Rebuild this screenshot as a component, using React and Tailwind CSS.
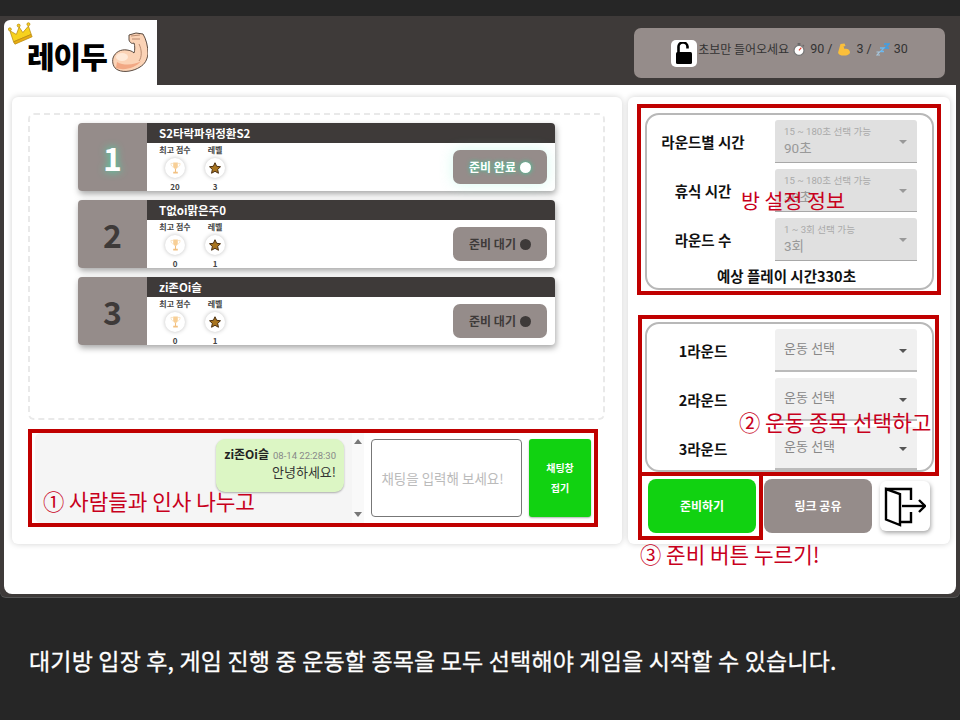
import React from "react";

const KR = "font-['Noto_Sans_CJK_KR','Noto_Sans',sans-serif]";
const RB = "font-['Roboto','Noto_Sans_CJK_KR',sans-serif]";

function Crown() {
  return (
    <svg className="absolute left-[4px] top-[1px]" width="26" height="25" viewBox="0 0 28 26">
      <g stroke="#b98a10" strokeWidth="0.8">
        <path d="M6 22 L2 10 L9 14 L12 6 L16 12 L22 5 L25 14 Z" fill="#f7d21e" />
        <path d="M6 22 L25 14 L26 16.5 L7.5 24.5 Z" fill="#e9ae12" />
        <circle cx="2" cy="8.5" r="1.6" fill="#f7d21e" />
        <circle cx="11.5" cy="4.5" r="1.6" fill="#f7d21e" />
        <circle cx="22" cy="3" r="1.6" fill="#f7d21e" />
      </g>
    </svg>
  );
}

function Arm() {
  return (
    <svg width="36" height="41" viewBox="0 0 36 41" className="shrink-0">
      <path
        d="M17 3 L24 1 L31 2 C34 7 36 14 36 22 C35 28 33 32 28 35 C22 39 12 41 6 38 C1 36 0 30 1 26 C3 20 9 17 15 18 C18 18.500 20 19 22 21 C23 18 23 14 22 11 C20 12 18 11 17 8 Z"
        fill="#fbd3b6"
        stroke="#4a3a30"
        strokeWidth="0.9"
      />
      <path d="M4 36 C12 39 24 36 29 29 C23 33 12 34 5 30 Z" fill="#f2a884" />
      <path d="M19 4 L28 3 M20 7 L28 7 M27 12 C30 18 30 25 27 29" stroke="#a87a60" strokeWidth="0.8" fill="none" />
      <ellipse cx="10" cy="25" rx="6" ry="4" fill="#fee9d8" />
    </svg>
  );
}

function OpenLock() {
  return (
    <svg width="18" height="22" viewBox="0 0 18 22">
      <path d="M3.500 11 V5.500 A4.500 4.500 0 0 1 12.500 4.500 V6.500" fill="none" stroke="#000" strokeWidth="2.600" />
      <rect x="1" y="10" width="16" height="12" rx="1.500" fill="#000" />
    </svg>
  );
}

function Stopwatch() {
  return (
    <svg width="12" height="13" viewBox="0 0 13 14" className="ml-[4px] mr-[5px] shrink-0">
      <rect x="5" y="0" width="3" height="2" fill="#666" />
      <path d="M10.500 2 L12 3.500" stroke="#666" strokeWidth="1.200" />
      <circle cx="6.500" cy="8" r="5.400" fill="#fff" stroke="#777" strokeWidth="1.300" />
      <path d="M6.500 8 L9 5" stroke="#e03a2a" strokeWidth="1.200" />
    </svg>
  );
}

function Bicep() {
  return (
    <svg width="14" height="13" viewBox="0 0 13 13" className="ml-[5px] mr-[5px] shrink-0">
      <path d="M3 1 L7 0.500 L8 3 L6 3.600 L7 6 C9 5 12 6 12.500 9 C12.500 12 8 13 4 12.500 C1 12 0 10 1 8 Z" fill="#fbbf3a" />
    </svg>
  );
}

function Zzz() {
  return (
    <svg width="14" height="13" viewBox="0 0 14 13" className="ml-[4px] mr-[4px] shrink-0">
      <path d="M8 1 H13 L9 5 H13" fill="none" stroke="#3d9fe8" strokeWidth="1.500" />
      <path d="M4 5 H8 L4.500 8.500 H8" fill="none" stroke="#6cb8ee" strokeWidth="1.300" />
      <path d="M0.500 9 H3.500 L1 12 H4" fill="none" stroke="#a8c8de" strokeWidth="1.100" />
    </svg>
  );
}

function Trophy() {
  return (
    <svg width="11" height="14" viewBox="0 0 12 14">
      <path d="M3.500 1 H8.500 V5 C8.500 7 7 8 6 8 C5 8 3.500 7 3.500 5 Z" fill="#f8cf96" />
      <path d="M3.500 2 H1 C1 4.500 2 5.500 3.800 6 M8.500 2 H11 C11 4.500 10 5.500 8.200 6" fill="none" stroke="#f6dcb6" strokeWidth="0.800" />
      <path d="M5.400 8 H6.600 V11 H5.400 Z M3.500 11 H8.500 V13 H3.500 Z" fill="#f1c081" />
    </svg>
  );
}

function Star() {
  return (
    <svg width="12" height="12" viewBox="0 0 24 24">
      <path
        d="M12 1.500 L15.300 8.600 L23 9.500 L17.300 14.800 L18.900 22.500 L12 18.600 L5.100 22.500 L6.700 14.800 L1 9.500 L8.700 8.600 Z"
        fill="#a8741f"
        stroke="#4a2f10"
        strokeWidth="2"
      />
    </svg>
  );
}

function Exit() {
  return (
    <svg width="42" height="44" viewBox="0 0 42 44" fill="none" stroke="#000" strokeWidth="2.400" strokeLinejoin="miter">
      <path d="M2 5 L16 10 V41 L2 35.500 Z" />
      <path d="M2 5 H27 V16" />
      <path d="M27 28 V38 H16" />
      <path d="M18 22 H41" />
      <path d="M35 16 L41 22 L35 28" />
    </svg>
  );
}

function Stat({ label, value, children }) {
  return (
    <div className="w-[40px] flex flex-col items-center">
      <div className="text-[8px] leading-[12px] font-bold text-[#444] whitespace-nowrap mt-[1px]">{label}</div>
      <div className="mt-[2px] w-[20px] h-[20px] rounded-full bg-white shadow-[0_0_4px_rgba(0,0,0,0.25)] flex items-center justify-center">
        {children}
      </div>
      <div className="mt-[3px] text-[8px] leading-[12px] font-bold text-[#444]">{value}</div>
    </div>
  );
}

function Player({ n, name, score, level, ready }) {
  return (
    <div className="w-[477px] h-[68px] flex rounded-[4px] shadow-[1px_3px_6px_rgba(0,0,0,0.35)] bg-white">
      <div
        className={
          "w-[69px] rounded-l-[4px] bg-[#958c8a] flex items-center justify-center text-[32px] font-bold " +
          (ready ? "text-white [text-shadow:0_0_8px_#3fe0a8]" : "text-[#3e3a39]")
        }
      >
        {n}
      </div>
      <div className="flex-1 flex flex-col min-w-0">
        <div className="h-[20px] bg-[#3e3a39] rounded-tr-[4px] pl-[12px] text-white text-[11.5px] font-bold leading-[20px]">
          {name}
        </div>
        <div className="flex-1 flex items-start pl-[8px] pr-[8px]">
          <Stat label="최고 점수" value={score}>
            <Trophy />
          </Stat>
          <Stat label="레벨" value={level}>
            <Star />
          </Stat>
          <div
            className={
              "ml-auto mt-[7px] w-[94px] h-[34px] rounded-[7px] bg-[#958c8a] flex items-center justify-center gap-[4px] text-[12px] font-bold " +
              (ready
                ? "text-white shadow-[0_0_14px_rgba(120,240,205,0.3)] [text-shadow:0_0_4px_#2fd69a]"
                : "text-[#3e3a39]")
            }
          >
            <span>{ready ? "준비 완료" : "준비 대기"}</span>
            <span
              className={
                "w-[11px] h-[11px] rounded-full " +
                (ready ? "bg-white shadow-[0_0_5px_#2fd69a]" : "bg-[#3e3a39]")
              }
            />
          </div>
        </div>
      </div>
    </div>
  );
}

function Caret({ c }) {
  return <span className={"ml-auto mt-[2px] w-0 h-0 border-x-[4px] border-x-transparent border-t-[4px] " + c} />;
}

function DisabledSelect({ hint, value }) {
  return (
    <div className={"w-[142px] h-[43px] rounded-t-[3px] bg-[#e0e0e0] border-b border-[#a8a8a8] flex items-center pl-[9px] pr-[10px] " + RB}>
      <div className="flex flex-col">
        <span className="text-[9.6px] leading-[14px] text-[#aaa] whitespace-nowrap">{hint}</span>
        <span className="text-[13.5px] leading-[19px] text-[#999]">{value}</span>
      </div>
      <Caret c="border-t-[#999]" />
    </div>
  );
}

function ExerciseSelect() {
  return (
    <div className={"w-[142px] h-[43px] rounded-t-[3px] bg-[#f0f0f0] border-b-2 border-[#bbb] flex items-center pl-[9px] pr-[10px] " + RB}>
      <span className="text-[13px] text-[#888] -mt-[1px]">운동 선택</span>
      <Caret c="border-t-[#555]" />
    </div>
  );
}

function Row({ label, children }) {
  return (
    <div className="flex items-center">
      <div className="w-[112px] text-center text-[14.5px] font-bold text-[#111] whitespace-nowrap">{label}</div>
      <div className="ml-[16px]">{children}</div>
    </div>
  );
}

export default function App() {
  return (
    <div className={"w-[960px] h-[720px] bg-[#262626] pt-[16px] flex flex-col relative overflow-hidden " + KR}>
      <div className="h-[581px] bg-[#3e3a39] px-[4px] pb-[3px] flex flex-col rounded-b-[6px] shadow-[0_1px_0_#555]">
        {/* header */}
        <div className="h-[69px] shrink-0 flex">
          <div className="relative mt-[4px] w-[153px] h-[65px] bg-white rounded-tl-[6px] flex items-center pl-[23px] pt-[5px]">
            <Crown />
            <span className="text-[30px] font-black leading-none text-black tracking-[-1px] whitespace-nowrap">레이두</span>
            <span className="ml-[5px] -mt-[5px]">
              <Arm />
            </span>
          </div>
          <div className="ml-auto mt-[12px] mr-[11px] w-[311px] h-[50px] rounded-[7px] bg-[#958c8a] flex items-center justify-center text-[12px] text-[#333] whitespace-nowrap">
            <span className="w-[26px] h-[27px] rounded-[5px] bg-white flex items-center justify-center mr-[1px]">
              <OpenLock />
            </span>
            <div className="flex items-center -mt-[8px]">
              <span>초보만 들어오세요</span>
              <Stopwatch />
              <span className={"text-[12.5px] " + RB}>90 /</span>
              <Bicep />
              <span className={"text-[12.5px] " + RB}>3 /</span>
              <Zzz />
              <span className={"text-[12.5px] " + RB}>30</span>
            </div>
          </div>
        </div>

        {/* body */}
        <div className="relative flex-1 bg-white rounded-b-[8px] pt-[12px] pl-[8px] flex gap-[6px] items-start">
          {/* left card */}
          <div className="w-[610px] h-[447px] bg-white rounded-[6px] shadow-[0_0_6px_rgba(0,0,0,0.18)] pt-[16px] pl-[16px]">
            <div className="w-[577px] h-[307px] border-2 border-dashed border-[#e9e9e9] rounded-[6px] pt-[8px] flex flex-col items-center gap-[9px]">
              <Player n="1" name="S2타락파워정환S2" score="20" level="3" ready />
              <Player n="2" name="T없oi맑은주0" score="0" level="1" />
              <Player n="3" name="zi존Oi슬" score="0" level="1" />
            </div>

            {/* chat */}
            <div className="relative mt-[9px] w-[570px] h-[98px] border-[4px] border-[#c00000] flex">
              <div className="ml-[3px] w-[317px] h-full bg-[#f5f5f5] rounded-l-[6px] flex justify-end pt-[6px] pr-[8px]">
                <div className="w-[128px] h-[53px] rounded-[9px] bg-[#dcf6c4] shadow-[0_1px_2px_rgba(0,0,0,0.3)] pt-[6px] pr-[8px] pl-[8px] flex flex-col items-end">
                  <div className="flex items-baseline gap-[4px] whitespace-nowrap">
                    <span className="text-[12px] font-bold text-[#222] leading-[18px]">zi존Oi슬</span>
                    <span className={"text-[9.5px] text-[#888] " + RB}>08-14 22:28:30</span>
                  </div>
                  <span className="text-[13px] leading-[18px] text-[#333]">안녕하세요!</span>
                </div>
              </div>
              <div className="w-[12px] h-full bg-[#f9f9f9] flex flex-col items-center justify-between py-[6px]">
                <span className="w-0 h-0 border-x-[4px] border-x-transparent border-b-[5px] border-b-[#777]" />
                <span className="w-0 h-0 border-x-[4px] border-x-transparent border-t-[5px] border-t-[#777]" />
              </div>
              <div className="ml-[7px] mt-[6px] w-[151px] h-[78px] bg-white border border-[#777] rounded-[4px] flex items-center justify-center pr-[8px] text-[13.5px] text-[#bbb] whitespace-nowrap">
                채팅을 입력해 보세요!
              </div>
              <div className="ml-[7px] mt-[6px] w-[62px] h-[78px] bg-[#11d211] rounded-[3px] shadow-[0_1px_2px_rgba(0,0,0,0.3)] flex flex-col items-center justify-center text-white text-[10px] font-bold leading-[20px]">
                <span>채팅창</span>
                <span>접기</span>
              </div>
            </div>
          </div>

          {/* right card */}
          <div className="w-[322px] h-[447px] bg-white rounded-[6px] shadow-[0_0_6px_rgba(0,0,0,0.18)] pt-[7px] pl-[9px]">
            <div className="w-[304px] h-[191px] border-[4px] border-[#c00000] pl-[4px] pt-[5px]">
              <div className="w-[289px] h-[177px] border-2 border-[#b8b8b8] rounded-[14px] pt-[5px] flex flex-col gap-[6px]">
                <Row label="라운드별 시간">
                  <DisabledSelect hint="15 ~ 180초 선택 가능" value="90초" />
                </Row>
                <Row label="휴식 시간">
                  <DisabledSelect hint="15 ~ 180초 선택 가능" value="30초" />
                </Row>
                <Row label="라운드 수">
                  <DisabledSelect hint="1 ~ 3회 선택 가능" value="3회" />
                </Row>
                <div className="text-center text-[14.5px] font-bold text-[#111] leading-[20px] pr-[6px] -mt-[1px]">
                  예상 플레이 시간330초
                </div>
              </div>
            </div>

            <div className="mt-[20px] ml-[1px] w-[301px] h-[161px] border-[4px] border-[#c00000] pl-[3px] pt-[3px]">
              <div className="w-[289px] h-[150px] border-2 border-[#b8b8b8] rounded-[14px] pt-[5px] flex flex-col gap-[6px]">
                <Row label="1라운드">
                  <ExerciseSelect />
                </Row>
                <Row label="2라운드">
                  <ExerciseSelect />
                </Row>
                <Row label="3라운드">
                  <ExerciseSelect />
                </Row>
              </div>
            </div>

            <div className="mt-[3px] pl-[11px] flex items-center">
              <div className="relative w-[108px] h-[54px] rounded-[8px] bg-[#11d211] flex items-center justify-center text-white text-[12px] font-bold">
                준비하기
                <span className="absolute -left-[10px] -top-[7px] w-[125px] h-[68px] border-[4px] border-[#c00000]" />
              </div>
              <div className="ml-[8px] w-[108px] h-[54px] rounded-[8px] bg-[#958c8a] flex items-center justify-center text-white text-[12px] font-bold">
                링크 공유
              </div>
              <div className="ml-[8px] w-[50px] h-[50px] rounded-[6px] bg-white shadow-[1px_2px_4px_rgba(0,0,0,0.35)] flex items-center justify-center">
                <Exit />
              </div>
            </div>
          </div>

          {/* annotations */}
          <span className="absolute left-[737px] top-[100px] text-[20.6px] leading-[30px] text-[#c8001c] whitespace-nowrap">방 설정 정보</span>
          <span className="absolute left-[735px] top-[322px] text-[21.3px] leading-[30px] text-[#c8001c] whitespace-nowrap">② 운동 종목 선택하고</span>
          <span className="absolute left-[39px] top-[401px] text-[21.3px] leading-[30px] text-[#c8001c] whitespace-nowrap">① 사람들과 인사 나누고</span>
          <span className="absolute left-[636px] top-[454px] text-[21.3px] leading-[30px] text-[#c8001c] whitespace-nowrap">③ 준비 버튼 누르기!</span>
        </div>
      </div>

      {/* caption */}
      <div className="pl-[29px] pt-[47px] text-[23px] tracking-[0.17px] leading-[32px] font-normal text-white whitespace-nowrap [-webkit-text-stroke:0.3px_white]">
        대기방 입장 후, 게임 진행 중 운동할 종목을 모두 선택해야 게임을 시작할 수 있습니다.
      </div>
    </div>
  );
}
